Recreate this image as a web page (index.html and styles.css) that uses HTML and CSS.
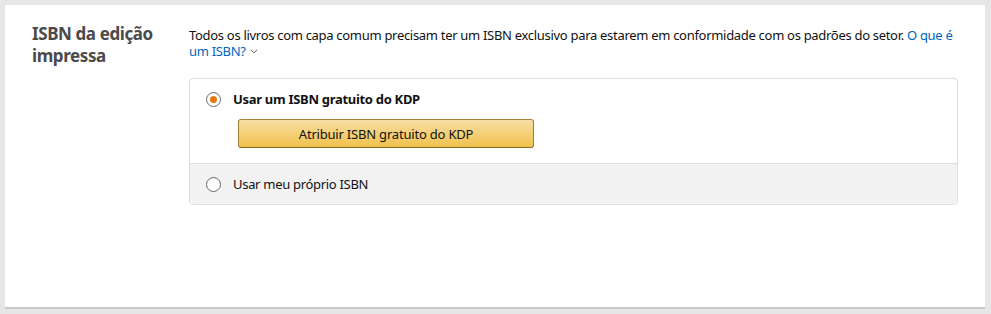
FILE: index.html
```html
<!DOCTYPE html>
<html lang="pt-BR">
<head>
<meta charset="utf-8">
<title>ISBN da edição impressa</title>
<link rel="stylesheet" href="styles.css">
</head>
<body>
<div class="panel">
  <h2 class="heading">ISBN da edição impressa</h2>
  <div class="content">
    <p class="desc">Todos os livros com capa comum precisam ter um ISBN exclusivo para estarem em conformidade com os padrões do setor. <a class="link" href="#">O que é</a> <a class="link" href="#">um ISBN?</a><svg class="chev" width="8" height="5" viewBox="0 0 8 5"><path d="M0.8 0.8 L4 3.8 L7.2 0.8" fill="none" stroke="#666" stroke-width="1"/></svg></p>
    <div class="box">
      <div class="opt opt-selected">
        <label class="row">
          <span class="radio checked"><span class="dot"></span></span>
          <span class="lbl bold">Usar um ISBN gratuito do KDP</span>
        </label>
        <button class="btn">Atribuir ISBN gratuito do KDP</button>
      </div>
      <div class="opt opt-other">
        <label class="row">
          <span class="radio"></span>
          <span class="lbl">Usar meu próprio ISBN</span>
        </label>
      </div>
    </div>
  </div>
</div>
</body>
</html>
```

FILE: styles.css
```css
html, body {
  margin: 0;
  padding: 0;
}
body {
  background: #e6e6e6;
  font-family: "Noto Sans", "Open Sans", Arial, sans-serif;
  color: #111;
}
.panel {
  margin: 5px 6px 6px 5px;
  height: 284px;
  background: #fff;
  border-bottom: 2px solid #c9c9c9;
  display: flex;
  padding: 18px 27px 0 27px;
}
.heading {
  margin: 0;
  width: 157px;
  flex: none;
  font-size: 17px;
  line-height: 22px;
  letter-spacing: -0.4px;
  font-weight: 700;
  color: #4a4a4a;
}
.content {
  flex: 1;
  padding-top: 4px;
}
.desc {
  margin: 0;
  font-size: 13px;
  line-height: 16px;
  letter-spacing: -0.3px;
}
.link {
  color: #0066c0;
  text-decoration: none;
}
.chev {
  margin-left: 4px;
  vertical-align: 2px;
}
.box {
  margin-top: 19px;
  border: 1px solid #dddddd;
  border-radius: 4px;
  overflow: hidden;
}
.opt {
  padding: 12px 16px;
}
.opt-selected {
  padding-bottom: 15px;
}
.opt-other {
  background: #f2f2f2;
  border-top: 1px solid #dddddd;
}
.row {
  display: flex;
  align-items: center;
  height: 16px;
  gap: 12px;
}
.radio {
  box-sizing: border-box;
  width: 15px;
  height: 15px;
  border: 1px solid #6c6c6c;
  border-radius: 50%;
  background: #fff;
  display: flex;
  align-items: center;
  justify-content: center;
  box-shadow: inset 0 1px 1px rgba(0,0,0,0.08);
}
.dot {
  width: 7px;
  height: 7px;
  border-radius: 50%;
  background: #e47911;
}
.lbl {
  font-size: 13px;
  line-height: 16px;
  letter-spacing: -0.3px;
  color: #111;
}
.bold {
  font-weight: 700;
}
.btn {
  display: block;
  margin: 12px 0 0 32px;
  width: 296px;
  height: 29px;
  box-sizing: border-box;
  border: 1px solid;
  border-color: #a88734 #9c7e31 #846a29;
  border-radius: 3px;
  background: linear-gradient(to bottom, #f7dfa5, #f0c14b);
  font-family: "Noto Sans", "Open Sans", Arial, sans-serif;
  font-size: 13px;
  letter-spacing: -0.2px;
  color: #111;
  padding: 0;
}
```
